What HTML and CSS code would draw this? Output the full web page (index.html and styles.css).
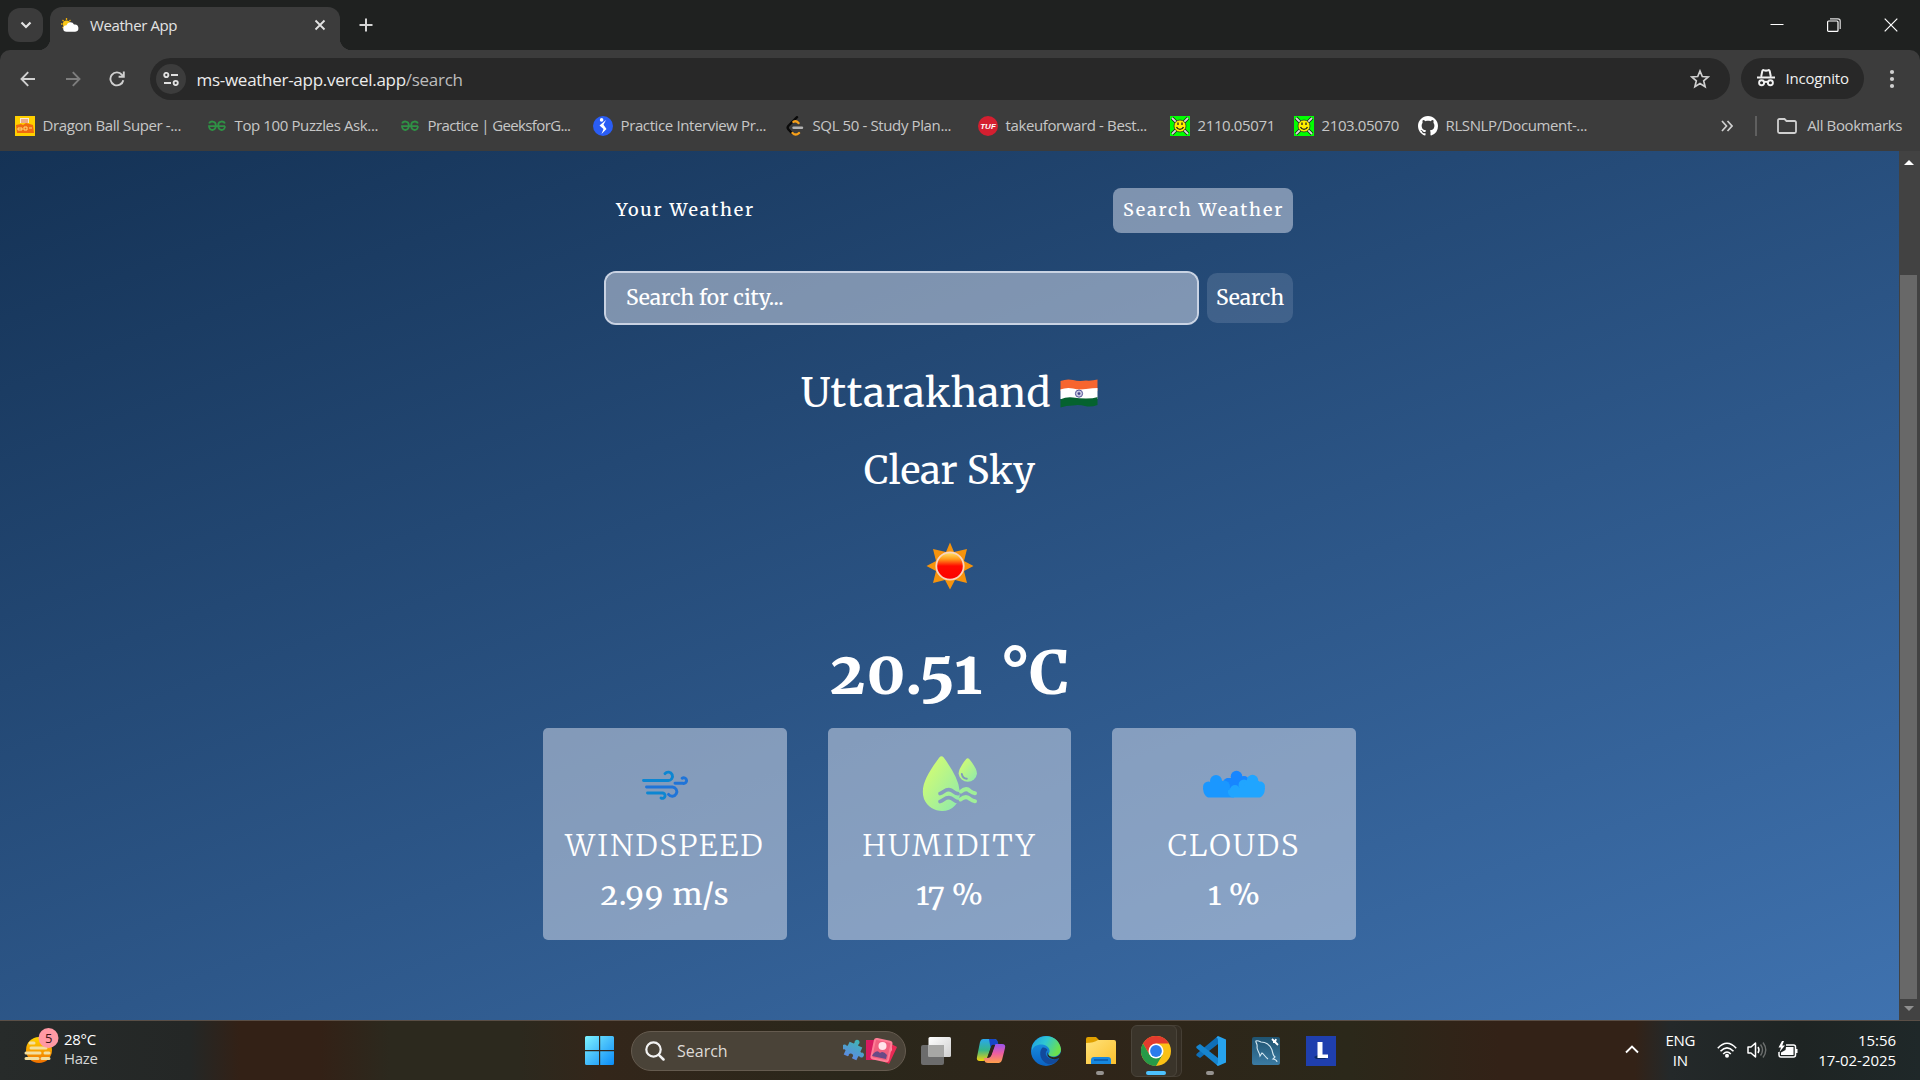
FILE: index.html
```html
<!DOCTYPE html>
<html lang="en">
<head>
<meta charset="utf-8">
<title>Weather App</title>
<link rel="stylesheet" href="styles.css">
</head>
<body>
<svg class="defs" width="0" height="0">
  <defs>
    <linearGradient id="winG" x1="0" y1="0" x2="1" y2="1"><stop offset="0" stop-color="#7df3ff"/><stop offset=".5" stop-color="#45bdfb"/><stop offset="1" stop-color="#0a8cf8"/></linearGradient>
    <linearGradient id="humG" x1="0" y1="0" x2="1" y2="1"><stop offset="0" stop-color="#ddff6a"/><stop offset="1" stop-color="#8be9ae"/></linearGradient>
    <linearGradient id="sunG" x1="0" y1="0" x2="0" y2="1"><stop offset="0" stop-color="#ffe66b"/><stop offset=".25" stop-color="#ff9a1a"/><stop offset=".5" stop-color="#ff0a00"/><stop offset="1" stop-color="#fb0000"/></linearGradient>
    <linearGradient id="hazeG" x1="0" y1="0" x2="0" y2="1"><stop offset="0" stop-color="#ffd500"/><stop offset="1" stop-color="#f07000"/></linearGradient>
    <linearGradient id="copA" x1="0" y1="0" x2="0" y2="1"><stop offset="0" stop-color="#2aa7ee"/><stop offset=".5" stop-color="#35b58a"/><stop offset="1" stop-color="#f5d20a"/></linearGradient>
    <linearGradient id="copB" x1="0" y1="0" x2="0" y2="1"><stop offset="0" stop-color="#9a53ee"/><stop offset=".5" stop-color="#ee5fa0"/><stop offset="1" stop-color="#ffa04a"/></linearGradient>
    <linearGradient id="edgeA" x1="0" y1="0" x2="1" y2=".4"><stop offset="0" stop-color="#1d9ce5"/><stop offset=".5" stop-color="#2fc7d2"/><stop offset="1" stop-color="#6be04e"/></linearGradient>
    <linearGradient id="edgeB" x1="0" y1="0" x2="0" y2="1"><stop offset="0" stop-color="#1c9be4"/><stop offset="1" stop-color="#0a62c4"/></linearGradient>
    <linearGradient id="foldG" x1="0" y1="0" x2="1" y2="1"><stop offset="0" stop-color="#ffe27a"/><stop offset="1" stop-color="#fbc02d"/></linearGradient>
    <linearGradient id="sqlG" x1="0" y1="0" x2="0" y2="1"><stop offset="0" stop-color="#1f5370"/><stop offset="1" stop-color="#3b7ba3"/></linearGradient>
    <linearGradient id="puzG" x1="0" y1="0" x2="0" y2="1"><stop offset="0" stop-color="#3fb6b5"/><stop offset="1" stop-color="#5b8be0"/></linearGradient>
    <linearGradient id="tvG" x1="0" y1="0" x2="1" y2="1"><stop offset="0" stop-color="#ffffff"/><stop offset="1" stop-color="#cfcfcf"/></linearGradient>
    <symbol id="gfg" viewBox="0 0 18 12"><g fill="none" stroke="#2f9145" stroke-width="1.8"><path d="M1.2 3.6C2 .9 7.800 .2 7.800 5.300c0 6-6.600 6.200-6.800.9H17"/><path d="M16.800 3.600C16 .9 10.200 .2 10.200 5.300c0 6 6.600 6.200 6.800.9"/></g></symbol>
    <symbol id="smile" viewBox="0 0 20 20"><path fill="#00ff00" d="M0 0h20v20H0z"/><path d="M2 2l16 16M18 2L2 18" stroke="#1c1c1c" stroke-width="3.400"/><path d="M2 2l16 16M18 2L2 18" stroke="#d8d8d8" stroke-width="1.800"/><circle cx="10" cy="10" r="6" fill="#ffee00" stroke="#333" stroke-width=".8"/><path d="M8 6.500v2.500M12 6.500v2.500M6.500 11c1.500 3.200 5.500 3.200 7 0" fill="none" stroke="#222" stroke-width="1.300"/></symbol>
  </defs>
</svg>
<div class="screen">
  <header class="tabstrip">
    <div class="tab-list-btn"><svg width="12" height="8" viewBox="0 0 12 8"><path d="M1.500 1.500L6 6l4.500-4.500" fill="none" stroke="#e3e3e3" stroke-width="2.200"/></svg></div>
    <div class="tab">
      <svg width="18" height="15" viewBox="0 0 18 15"><circle cx="5.500" cy="6" r="3.600" fill="#fbc817"/><path d="M5.500 0v2M0 6h1.600M1.500 2l1.200 1.200M9.500 2L8.300 3.200M1.500 10l1.200-1.200" stroke="#e8a90a" stroke-width="1.300"/><path d="M5.500 13.800a3.300 3.300 0 0 1 0-6.600A4 4 0 0 1 13 6.500a3.700 3.700 0 1 1 1.200 7.300z" fill="#fff"/></svg>
      <span class="tab-title">Weather App</span>
      <svg class="tab-close" width="12" height="12" viewBox="0 0 12 12"><path d="M1.500 1.500l9 9M10.500 1.500l-9 9" stroke="#e3e3e3" stroke-width="1.800"/></svg>
    </div>
    <svg class="plus" width="14" height="14" viewBox="0 0 14 14"><path d="M7 .5v13M.5 7h13" stroke="#d5d5d5" stroke-width="2"/></svg>
    <div class="win-controls">
      <svg width="14" height="14" viewBox="0 0 14 14"><path d="M.5 6.500h13" stroke="#fff" stroke-width="1"/></svg>
      <svg width="14" height="14" viewBox="0 0 14 14"><rect x=".6" y="3" width="10.400" height="10.400" rx="1" fill="none" stroke="#fff" stroke-width="1.200"/><path d="M3 .8h8q2.200 0 2.200 2.200v8" fill="none" stroke="#ddd" stroke-width="1.200"/></svg>
      <svg width="14" height="14" viewBox="0 0 14 14"><path d="M.7.700l12.600 12.600M13.300.7L.7 13.300" stroke="#fff" stroke-width="1.200"/></svg>
    </div>
  </header>

  <div class="toolbar">
    <svg class="nav" width="16" height="16" viewBox="0 0 16 16"><path d="M15 8H2M8.200 1.200L1.500 8l6.700 6.800" fill="none" stroke="#d0d0d0" stroke-width="1.900"/></svg>
    <svg class="nav" width="16" height="16" viewBox="0 0 16 16"><path d="M1 8h13M7.800 1.200L14.500 8l-6.700 6.800" fill="none" stroke="#7d7d7d" stroke-width="1.900"/></svg>
    <svg class="nav" width="16" height="16" viewBox="0 0 16 16"><path d="M14.300 9.200A6.500 6.500 0 1 1 13 3.800L14.600 5.500M14.800.5v5.200H9.600" fill="none" stroke="#d0d0d0" stroke-width="1.900"/></svg>
    <div class="omnibox">
      <div class="site-chip"><svg width="16" height="14" viewBox="0 0 16 14"><g fill="none" stroke="#e0e0e0" stroke-width="1.900"><circle cx="3.300" cy="3" r="2.100"/><path d="M8 3h7M1 11h7"/><circle cx="12.700" cy="11" r="2.100"/></g></svg></div>
      <span class="url">ms-weather-app.vercel.app<i>/search</i></span>
      <svg class="star" width="20" height="20" viewBox="0 0 20 20"><path d="M10 2l2.300 5.500 5.900.5-4.500 3.900 1.400 5.800L10 14.600l-5.100 3.100 1.400-5.800L1.800 8l5.900-.5z" fill="none" stroke="#d0d0d0" stroke-width="1.700"/></svg>
    </div>
    <div class="incognito">
      <svg width="18" height="18" viewBox="0 0 18 18"><path d="M4.200 7.500L5.300 2q.4-1.200 1.600-.8l2.100.6 2.100-.6q1.200-.4 1.600.8l1.100 5.500M0 8.500h18" fill="none" stroke="#f0f0f0" stroke-width="2"/><g fill="none" stroke="#f0f0f0" stroke-width="1.900"><circle cx="4.600" cy="13.700" r="2.500"/><circle cx="13.400" cy="13.700" r="2.500"/><path d="M7 13.200q2-1 4 0"/></g></svg>
      <span>Incognito</span>
    </div>
    <svg class="dots" width="6" height="20" viewBox="0 0 6 20" fill="#d0d0d0"><circle cx="3" cy="3" r="2.100"/><circle cx="3" cy="10" r="2.100"/><circle cx="3" cy="17" r="2.100"/></svg>
  </div>

  <nav class="bookmarks">
    <div class="bm"><svg width="20" height="20" viewBox="0 0 20 20"><path fill="#ffd000" d="M0 0h20v20H0z"/><path fill="#f8ecd8" d="M5 2h9v5H5z"/><path d="M6 4h7M6 6h7" stroke="#e06a3a" stroke-width="1"/><path fill="#f06a10" d="M1 9l5-1 2 1 3-2 7 2 1 8H2z"/><path d="M3 12h4v2H3zM9 11h3v3H9zM14 12h3" stroke="#ffdf7a" fill="none"/></svg><span>Dragon Ball Super -...</span></div>
    <div class="bm"><svg class="ic" width="20" height="12"><use href="#gfg"/></svg><span>Top 100 Puzzles Ask...</span></div>
    <div class="bm"><svg class="ic" width="20" height="12"><use href="#gfg"/></svg><span class="tight">Practice | GeeksforG...</span></div>
    <div class="bm"><svg width="20" height="20" viewBox="0 0 20 20"><circle cx="10" cy="10" r="10" fill="#2a5df5"/><circle cx="8.600" cy="3.900" r="1.800" fill="#fff"/><path fill="#fff" d="M13 4L6.500 9.500l4 3.500-2 5 5-5-3-4.200z"/></svg><span>Practice Interview Pr...</span></div>
    <div class="bm"><svg width="20" height="20" viewBox="0 0 20 20"><g fill="none" stroke-width="2.400" stroke-linecap="round"><path d="M12 1.200L3.300 10q-1.300 1.600 0 3.200l3.700 4" stroke="#0a0a0a"/><path d="M8.500 5.800q2.500-1.500 5 1.200M7.500 17q3.200 3.200 6.500 0" stroke="#f8a11a"/><path d="M8.500 11.800H17" stroke="#b3b3b3"/></g></svg><span>SQL 50 - Study Plan...</span></div>
    <div class="bm"><svg width="20" height="20" viewBox="0 0 20 20"><circle cx="10" cy="10" r="10" fill="#d41f30"/><text x="10" y="12.900" class="tuf" text-anchor="middle">TUF</text></svg><span>takeuforward - Best...</span></div>
    <div class="bm"><svg width="20" height="20"><use href="#smile"/></svg><span>2110.05071</span></div>
    <div class="bm"><svg width="20" height="20"><use href="#smile"/></svg><span>2103.05070</span></div>
    <div class="bm"><svg width="20" height="20" viewBox="0 0 16 16"><path fill="#fff" d="M8 0C3.580 0 0 3.580 0 8c0 3.540 2.290 6.530 5.470 7.590.4.070.55-.17.55-.38 0-.19-.01-.82-.01-1.490-2.010.37-2.530-.49-2.690-.94-.09-.23-.48-.94-.82-1.130-.28-.15-.68-.52-.01-.53.63-.01 1.080.58 1.230.82.72 1.210 1.870.87 2.330.66.070-.52.28-.87.51-1.070-1.780-.2-3.640-.89-3.640-3.950 0-.87.31-1.590.82-2.150-.08-.2-.36-1.020.08-2.120 0 0 .67-.21 2.200.82.64-.18 1.320-.27 2-.27s1.360.09 2 .27c1.530-1.040 2.200-.82 2.200-.82.44 1.100.16 1.920.08 2.120.51.56.82 1.270.82 2.150 0 3.070-1.870 3.750-3.650 3.950.29.25.54.73.54 1.480 0 1.070-.01 1.930-.01 2.200 0 .21.15.46.55.38A8.010 8.010 0 0 0 16 8c0-4.420-3.580-8-8-8z"/></svg><span>RLSNLP/Document-...</span></div>
    <div class="bm-end">
      <svg width="12" height="12" viewBox="0 0 12 12"><path d="M1 1l4.500 5L1 11M6.500 1L11 6l-4.500 5" fill="none" stroke="#d0d0d0" stroke-width="1.700"/></svg>
      <b></b>
      <svg width="20" height="16" viewBox="0 0 20 16"><path d="M1 2.500V13.500q0 1.500 1.500 1.500h15q1.500 0 1.500-1.500v-9Q19 3 17.500 3H9.500L7.500 1h-5Q1 1 1 2.500z" fill="none" stroke="#d0d0d0" stroke-width="1.800"/></svg>
      <span>All Bookmarks</span>
    </div>
  </nav>

  <div class="viewport">
    <main class="page">
      <div class="switch"><span class="your">Your Weather</span><span class="active">Search Weather</span></div>
      <div class="search-form"><div class="field">Search for city...</div><div class="submit">Search</div></div>
      <div class="city"><span>Uttarakhand</span>
        <svg width="38" height="29" viewBox="0 0 38 29"><defs><clipPath id="fl"><path d="M.5 2Q7-.5 13 1t13 .5Q32 2 37.500.5V26Q31 28.500 25 27t-12-.5Q6 26.500 .5 28.500z"/></clipPath></defs><g clip-path="url(#fl)"><path fill="#f7652f" d="M0 0h38v12H0z"/><path fill="#fff" d="M0 10.500Q7 8 13 9.500t13 .5 12-1V20H0z"/><path fill="#05622f" d="M0 20.500Q7 17.500 13 18.500t13 1 12-1.500V29H0z"/></g><circle cx="19" cy="14.600" r="3.600" fill="#c9c9e0" stroke="#55559a" stroke-width="1"/><circle cx="19" cy="14.600" r="1.400" fill="#45458c"/></svg>
      </div>
      <div class="desc">Clear Sky</div>
      <svg class="sun" width="48" height="48" viewBox="-24 -24 48 48"><path fill="#f6930c" d="M0-23.500L4-14 17-17 14-5 23.500 0 14 5 17 17 5 14 0 23.500-5 14-17 17-14 5-23.500 0-14-5-17-17-4-14z"/><circle r="13.700" fill="url(#sunG)" stroke="#f9d5bd" stroke-width="1.800"/></svg>
      <div class="temp">20.51 °C</div>
      <div class="cards">
        <section class="card">
          <svg width="46" height="56" viewBox="0 0 46 56"><g fill="none" stroke-width="2.900" stroke-linecap="round"><path d="M1.500 24.500h24.500a4.200 4.200 0 1 0-3-6.800" stroke="#0c86d2"/><path d="M4.500 31h26a4.600 4.600 0 1 1-4 7.300" stroke="#1f74d8"/><path d="M5.500 37h14.500a2.700 2.700 0 1 1-1 5" stroke="#0c86d2"/><path d="M33 27.300H41a2.800 2.800 0 1 0-.8-5" stroke="#1f74d8"/></g></svg>
          <h3>WINDSPEED</h3><p class="speed">2.99 m/s</p>
        </section>
        <section class="card">
          <svg width="56" height="56" viewBox="0 0 56 56"><defs><mask id="hm"><path fill="#fff" d="M0 0h56v56H0z"/><g fill="none" stroke="#000" stroke-width="3.700" stroke-linecap="round"><path d="M18 37.500c4-1 4.500-4 9-3.800s5 4 9 4M18 45.500c4-1 4.500-4 9-3.800s5 4 9 4"/></g></mask></defs><path mask="url(#hm)" fill="url(#humG)" d="M17.300 1.600Q19.500-1 21.700 1.600 36.500 21.500 37.500 34q1.500 9-4.500 15.500c-8.500 9.500-25.500 6.500-31-6.500C-2.500 30 6.500 16 17.300 1.600z"/><path fill="url(#humG)" d="M44.200 3q1.500-1.500 3 0 7.800 9.500 7.800 14.700a9.300 9.300 0 0 1-18.400 0Q36.600 12.500 44.200 3z"/><path d="M39.800 18q1 4.500 5 4.800" fill="none" stroke="#8199bb" stroke-width="1.900" stroke-linecap="round"/><path d="M39 35.500c3-2.500 6-3.500 9-.5q2.500 2 5 2.300M38.500 43.500c3-2.500 6.500-3.500 9.500-.5q2.500 2 5 2.300" fill="none" stroke="#a0ef98" stroke-width="4" stroke-linecap="round"/></svg>
          <h3>HUMIDITY</h3><p>17 %</p>
        </section>
        <section class="card">
          <svg width="62" height="56" viewBox="0 0 62 56"><g fill="#1786ff"><circle cx="33.500" cy="20.500" r="5.800"/><circle cx="25" cy="26.500" r="4.500"/><circle cx="41" cy="25" r="5"/><path d="M24 22h20v15H24z"/></g><g fill="#1a97ff"><circle cx="13" cy="25" r="6"/><circle cx="5.500" cy="31" r="5.500"/><circle cx="21" cy="30.500" r="6"/><path d="M0 32h31v9.500H5Q.5 40 0 32z"/><path d="M8 26h10v10H8z"/></g><g fill="#20a5ff"><circle cx="49.500" cy="24.500" r="5.700"/><circle cx="41" cy="29" r="5.500"/><circle cx="57" cy="30.500" r="5"/><circle cx="32" cy="34" r="5"/><path d="M29 32h33q-.5 8-5 9.500H29q-5-3-4-7zM42 25h14v10H40z"/></g></svg>
          <h3>CLOUDS</h3><p>1 %</p>
        </section>
      </div>
    </main>
    <aside class="scrollbar">
      <svg width="10" height="5" viewBox="0 0 10 5"><path d="M5 0l5 5H0z" fill="#fff"/></svg>
      <div class="thumb"></div>
      <svg width="10" height="5" viewBox="0 0 10 5"><path d="M0 0h10L5 5z" fill="#8f8f8f"/></svg>
    </aside>
  </div>

  <footer class="taskbar">
    <div class="widget">
      <svg width="36" height="42" viewBox="0 0 36 42"><circle cx="15" cy="23" r="13" fill="url(#hazeG)"/><g stroke="#f3dfa0" stroke-width="3" stroke-linecap="round"><path d="M6 16h4M7 21h15M2 26h14M21 26h4M2 31.500h12M18 31.500h7"/></g><circle cx="24.500" cy="11" r="10" fill="#ff99a4"/><text x="24.500" y="16" text-anchor="middle" class="badge">5</text></svg>
      <div><p>28°C</p><p class="haze">Haze</p></div>
    </div>
    <div class="dock">
      <svg class="start" width="30" height="30" viewBox="0 0 30 30"><path fill="url(#winG)" d="M1.500 0H14v14H0V1.500Q0 0 1.500 0zM15.200 0h12.300Q29 0 29 1.500V14H15.200zM0 15.200h14V29H1.500Q0 29 0 27.500zM15.200 15.200H29v12.300q0 1.500-1.500 1.500H15.200z"/></svg>
      <div class="tb-search">
        <svg width="20" height="20" viewBox="0 0 20 20"><circle cx="8.500" cy="8.500" r="7.200" fill="none" stroke="#f2f2f2" stroke-width="2.200"/><path d="M13.800 13.800l4.700 4.700" stroke="#f2f2f2" stroke-width="2.500" stroke-linecap="round"/></svg>
        <span>Search</span>
        <svg class="deco" width="54" height="28" viewBox="0 0 54 28"><path fill="url(#puzG)" transform="rotate(25 10 14)" d="M3 7h4.500q.8-1 0-2.200Q7.500 2 10 2t2.500 2.800Q11.700 6 12.500 7H17v4.500q1 .8 2.200 0 2.600 0 2.600 2.500t-2.600 2.500Q18 15.700 17 16.500V21h-4.500q-1-.8-.2-2-.3-2-2.300-2t-2.300 2q.8 1.200-.2 2H3v-4.500q-1-.8-2.200 0-2.600 0-2.600-2.500T.8 11.500q1.200.8 2.200 0z"/><rect x="23" y="3" width="15" height="20" fill="#d81b60"/><rect x="37" y="6" width="14" height="19" rx="1" fill="#e82a55" transform="rotate(25 44 15)"/><circle cx="46" cy="12" r="3" fill="#f5a0b0"/><rect x="30" y="3" width="17" height="20" rx="2" fill="#f0607f" stroke="#ff7d96" stroke-width="2" transform="rotate(12 38 13)"/><circle cx="39.500" cy="9" r="4" fill="#ffe4ea"/><path d="M30 17q4-5 7-1 3-3 7 2l-1 4-14-3z" fill="#6a4a86"/></svg>
      </div>
      <div class="app"><svg width="30" height="28" viewBox="0 0 30 28"><rect y="8" width="23" height="20" rx="2" fill="#6c6c6c"/><rect x="7.500" width="22.500" height="20" rx="1.500" fill="url(#tvG)"/><path fill="#a7a7a5" d="M7.500 8H23v12H7.500z"/></svg></div>
      <div class="app"><svg width="30" height="28" viewBox="0 0 30 28"><path d="M7 2h11q3 0 3.500 3l.5 2h-3q-3 0-4 3l-4 11q-1 3-4 3H4q-4 0-3-4L4 5q.8-3 3-3z" fill="url(#copA)"/><path d="M13 2h5q3 0 3.800 3l.8 3h-4q-3 0-4 3z" fill="#1746c8"/><path d="M23 26H12q-3 0-3.500-2.500L8 21h3.500q3 0 4-3l4-11h6.500q4 0 3 4l-3 12q-.8 3-3 3z" fill="url(#copB)"/><path d="M15.500 8.500L11.800 20q2.700-.2 3.500-2.500L18.600 8q-2-.6-3.100.5z" fill="#2e2519"/></svg></div>
      <div class="app"><svg width="30" height="30" viewBox="0 0 30 30"><circle cx="15" cy="15" r="15" fill="url(#edgeB)"/><path d="M1 11C5-3 27-4 30 13c0 5-4 8-9 7.500-4-.4-4-2-3-3.500 2-3-1-8-7-8.500-5-.3-9 2-10 6z" fill="url(#edgeA)"/><path d="M11 12c-4 5-1 14 6 16 5 1 9-2 11-6-4 2-9 2-11.500-1-2.500-2.500-2-5 0-7-1-2-4-3-5.500-2z" fill="#124a9c"/><path d="M30 16q1 4-1.500 6-3 1.500-7 1-6-1-5-7 .5 6 8 5 4-1 5.500-5z" fill="#2c271c"/></svg></div>
      <div class="app run"><svg width="30" height="27" viewBox="0 0 30 27"><path fill="#e0a000" d="M0 2q0-2 2-2h8l3 3v6H0z"/><path fill="url(#foldG)" d="M0 6q8 0 12-3h16q2 0 2 2v22H0z"/><path fill="#1688e0" d="M5 27v-4q0-3 3-3h14q3 0 3 3v4z"/><path d="M8 23h14" stroke="#0a4f9c" stroke-width="1.300"/></svg></div>
      <div class="app current"><svg width="30" height="30" viewBox="0 0 30 30"><circle cx="15" cy="15" r="15" fill="#fbc116"/><path fill="#e33b2e" d="M2 7.500A15 15 0 0 1 28 7.500H15L8.500 18.800z"/><path fill="#269a48" d="M2 7.500A15 15 0 0 0 15 30l6.500-11.200H8.500z"/><circle cx="15" cy="15" r="7.500" fill="#fff"/><circle cx="15" cy="15" r="5.900" fill="#2b7cec"/></svg></div>
      <div class="app run"><svg width="30" height="30" viewBox="0 0 30 30"><path fill="#0f6fb8" d="M22 0v8L4 22 1 20q-1.500-1 0-2.500z"/><path fill="#1685cf" d="M22 30v-8L4 8 1 10q-1.500 1 0 2.500z"/><path fill="#27a3ee" d="M22 0l8 3.500v23L22 30l-1.500-1.500Q22 28 22 26V4q0-2-1.500-2.500z"/></svg></div>
      <div class="app"><svg width="28" height="28" viewBox="0 0 28 28"><rect width="28" height="28" rx="2" fill="url(#sqlG)"/><path d="M25 25c0-2-3-3-4-3l2-2c-2-1-2-3-3-7-2-5-6-8-11-8C7 4 5 3 4 4s2 3 1 6c0 4 2 4 3 9l2-3c2 1 3 4 6 6" fill="none" stroke="#d5e8f2" stroke-width="1.100"/><path d="M20 2l3 3 3 3M24 2l-1 3-2 0" stroke="#fff" stroke-width="1.800" fill="none"/></svg></div>
      <div class="app"><svg width="30" height="30" viewBox="0 0 30 30"><path fill="#1f3fae" d="M0 0h30v30H0z"/><path fill="#0b2a63" d="M8 21l4-2 9 4H10z"/><path fill="#fff" d="M11.500 6h5v12.500H22V22H11.500z"/></svg></div>
    </div>
    <div class="tray">
      <svg class="up" width="14" height="9" viewBox="0 0 14 9"><path d="M1 7.500l6-6 6 6" fill="none" stroke="#fff" stroke-width="1.900"/></svg>
      <div class="lang"><p>ENG</p><p>IN</p></div>
      <svg class="wifi" width="20" height="16" viewBox="0 0 20 16"><g fill="none" stroke="#fff" stroke-width="1.600"><path d="M.8 6.200Q10-3.600 19.200 6.200M3.500 9.200Q10 2.500 16.500 9.200M6.200 12Q10 8 13.800 12"/></g><circle cx="10" cy="13.700" r="2" fill="#fff"/></svg>
      <svg class="vol" width="20" height="18" viewBox="0 0 20 18"><path d="M1 6h3l4.500-4v14L4 12H1z" fill="none" stroke="#fff" stroke-width="1.500" stroke-linejoin="round"/><path d="M11 6q2 3 0 6" fill="none" stroke="#fff" stroke-width="1.500"/><path d="M13.500 3.500q4 5.500 0 11M16 1.500q5.500 7.500 0 15" fill="none" stroke="#6c6f6e" stroke-width="1.400"/></svg>
      <svg class="bat" width="20" height="18" viewBox="0 0 20 18"><path d="M8 4h7.500q2 0 2 2v8q0 2-2 2H3q-2 0-2-2v-3" fill="none" stroke="#fff" stroke-width="1.500"/><path d="M8 6h7.500v8H3v-2.500L7.500 9z" fill="#fff"/><path d="M18 8h1.500v4H18zM4 0L.5 6.500H3L1.500 11 7 4.500H4.200L6 0z" fill="#fff"/></svg>
      <div class="clock"><p>15:56</p><p>17-02-2025</p></div>
    </div>
  </footer>
</div>
</body>
</html>
```
FILE: styles.css
```css
* { box-sizing: border-box; margin: 0; padding: 0; }
body {
  width: 1920px; height: 1080px; overflow: hidden;
  font-family: "Segoe UI", "Open Sans", "Noto Sans", sans-serif;
  color: #e3e3e3; background: #1f2120;
}
svg { display: block; flex: none; }
.defs { position: absolute; }
p, span { white-space: nowrap; }
.screen { height: 1080px; display: flex; flex-direction: column; }

/* tab strip */
.tabstrip { height: 50px; display: flex; align-items: center; padding-left: 8px; }
.tab-list-btn { width: 35px; height: 34px; border-radius: 12px; background: #3b3b3b; display: grid; place-items: center; }
.tab {
  align-self: flex-end; width: 290px; height: 43px; margin-left: 7px; padding: 0 14px 7px 11px;
  border-radius: 12px 12px 0 0; background: #3c3c3c; display: flex; align-items: center; position: relative;
}
.tab::before, .tab::after { content: ""; position: absolute; bottom: 0; width: 12px; height: 12px; }
.tab::before { left: -12px; background: radial-gradient(circle at 0 0, transparent 12px, #3c3c3c 12.500px); }
.tab::after { right: -12px; background: radial-gradient(circle at 100% 0, transparent 12px, #3c3c3c 12.500px); }
.tab-title { margin-left: 11px; font-size: 15px; letter-spacing: -.4px; }
.tab-close { margin-left: auto; }
.plus { margin-left: 19px; }
.win-controls { margin-left: auto; display: flex; gap: 43px; padding-right: 22px; }

/* toolbar */
.toolbar { height: 51px; background: #3c3c3c; border-radius: 10px 10px 0 0; display: flex; align-items: center; padding: 7px 0 1px 20px; }
.nav { margin-right: 28.500px; }
.omnibox { width: 1580px; height: 42px; margin-left: -4px; border-radius: 21px; background: #282828; display: flex; align-items: center; padding: 0 20px 0 6px; }
.site-chip { width: 30px; height: 30px; border-radius: 15px; background: #3c3c3c; display: grid; place-items: center; }
.url { margin: 1px 0 0 11px; font-size: 17px; color: #ececec; letter-spacing: -.28px; }
.url i { font-style: normal; color: #bdbdbd; }
.star { margin-left: auto; }
.incognito { width: 123px; height: 41px; margin-left: 11px; border-radius: 21px; background: #282828; display: flex; align-items: center; gap: 11px; padding: 0 0 1px 16px; font-size: 15px; color: #f0f0f0; letter-spacing: -.2px; }
.dots { margin-left: 25.500px; }

/* bookmarks */
.bookmarks {
  height: 50px; background: #3c3c3c; color: #c7c7c7; font-size: 15px; padding-left: 15px; align-items: center;
  display: grid; grid-template-columns: 192px 193px 193px 192px 193px 192px 124px 124px 1fr auto;
}
.bm { display: flex; align-items: center; gap: 7.500px; letter-spacing: -.38px; }
.bm span, .bm-end span { padding-bottom: 2px; }
.bm .tight { letter-spacing: -.62px; }
.tuf { font: italic bold 8px "Liberation Sans", sans-serif; fill: #fff; letter-spacing: 0; }
.bm-end { display: flex; align-items: center; padding-right: 18px; letter-spacing: -.4px; }
.bm-end b { width: 2px; height: 20px; margin: 0 20px 0 22px; background: #5f5f5f; }
.bm-end span { margin-left: 10px; }

/* page */
.viewport { height: 869px; display: flex; }
.page {
  width: 1899px; padding-top: 37px; display: flex; flex-direction: column; align-items: center;
  background: linear-gradient(160deg, #112d4e, #3f72af) bottom / 100% 993px no-repeat;
  font-family: Merriweather, "DejaVu Serif Condensed", "DejaVu Serif", serif; color: #fff;
  font-variant-numeric: oldstyle-nums;
}
.switch, .search-form { width: 689px; margin-right: 2px; }
.switch { height: 45px; display: flex; justify-content: space-between; align-items: center; font-size: 18px; font-weight: 500; letter-spacing: 1.850px; }
.your { padding-left: 12px; padding-bottom: 3px; }
.active { width: 180px; height: 45px; line-height: 43px; padding-left: 1px; text-align: center; border-radius: 8px; background: rgba(219, 226, 239, .5); }
.search-form { margin-top: 38px; display: flex; align-items: center; gap: 8px; font-size: 21px; font-weight: 500; letter-spacing: -.03px; }
.field { width: 595px; height: 54px; padding-left: 20px; line-height: 49px; border: 2px solid rgba(219, 226, 239, .9); border-radius: 12px; background: rgba(219, 226, 239, .5); background-clip: padding-box; }
.submit { width: 86px; height: 50px; line-height: 49px; text-align: center; border-radius: 10px; background: rgba(219, 226, 239, .15); }
.city { height: 60px; margin-top: 38px; display: flex; align-items: center; gap: 9px; font-size: 40px; letter-spacing: .5px; }
.city span { line-height: 60px; }
.desc { margin-top: 18px; font-size: 38px; line-height: 60px; }
.sun { margin-top: 41px; }
.temp { height: 80px; margin-top: 43px; padding-left: 2px; font-size: 60px; font-weight: 800; line-height: 80px; letter-spacing: 2px; white-space: nowrap; }
.cards { margin-top: 15px; display: flex; gap: 41px; }
.card { width: 243.500px; height: 212px; padding-top: 28px; border-radius: 5px; background: rgba(219, 226, 239, .5); display: flex; flex-direction: column; align-items: center; }
.card h3 { margin-top: 13px; font-size: 30px; font-weight: 350; line-height: 40px; letter-spacing: 2px; }
.card p { margin-top: 9px; font-size: 30px; font-weight: 550; line-height: 40px; letter-spacing: .2px; }
.card .speed { letter-spacing: .9px; }

/* scrollbar */
.scrollbar { width: 21px; background: #424242; display: flex; flex-direction: column; align-items: center; padding: 9px 2px 0 0; }
.thumb { width: 17px; height: 724px; margin: 110px 0 7px; background: #686868; }

/* taskbar */
.taskbar {
  height: 60px; border-top: 1px solid #5a4f47; display: flex; position: relative; color: #fff;
  background: linear-gradient(90deg, #272b2a 0, #242726 190px, #332116 240px, #332116 320px, #2c291e 390px, #2c291e 520px, #33261a 600px, #2a271b 850px, #2f2519 1100px, #2b281a 1350px, #332217 1500px, #332217 1635px, #24292a 1670px, #1e2423 1800px, #1f2829 1920px);
}
.widget { width: 585px; padding: 6px 0 0 24px; display: flex; gap: 4px; font-size: 15px; line-height: 20px; letter-spacing: -.3px; }
.widget p:first-child { padding-top: 2px; }
.widget p { height: 21px; }
.haze { color: #d5d5d5; }
.badge { font-size: 13px; fill: #3a1216; }
.dock { display: flex; align-items: center; }
.tb-search { width: 275px; height: 40px; margin: 0 2px 0 16px; border-radius: 20px; border: 1px solid #655b4f; background: #4a4338; display: flex; align-items: center; padding: 0 8px 0 13px; color: #dedbd7; font-size: 16px; letter-spacing: 0; }
.tb-search span { margin-left: 12px; }
.deco { margin-left: auto; }
.app { width: 55px; height: 59px; display: grid; place-items: center; position: relative; }
.app svg { position: relative; }
.run::after, .current::after { content: ""; position: absolute; bottom: 5px; left: 23px; width: 8px; height: 4px; border-radius: 2px; background: #969390; }
.current::after { left: 18px; width: 20px; background: #4cc2ff; }
.current::before { content: ""; position: absolute; left: 3px; top: 4px; width: 44px; height: 50px; border-radius: 6px; background: #3a342a; border: 1px solid #4a443a; box-shadow: 5px 0 0 -1px #342d23, 5px 0 0 0 #453e34; }
.tray { margin-left: auto; padding: 0 24px 2px 0; display: flex; align-items: center; font-size: 15px; line-height: 20px; letter-spacing: -.3px; }
.lang { width: 40px; margin: 0 17px 0 21px; text-align: center; }
.vol { margin-left: 10px; }
.bat { margin: 0 20px 0 11px; }
.clock { text-align: right; letter-spacing: -.05px; }
```
